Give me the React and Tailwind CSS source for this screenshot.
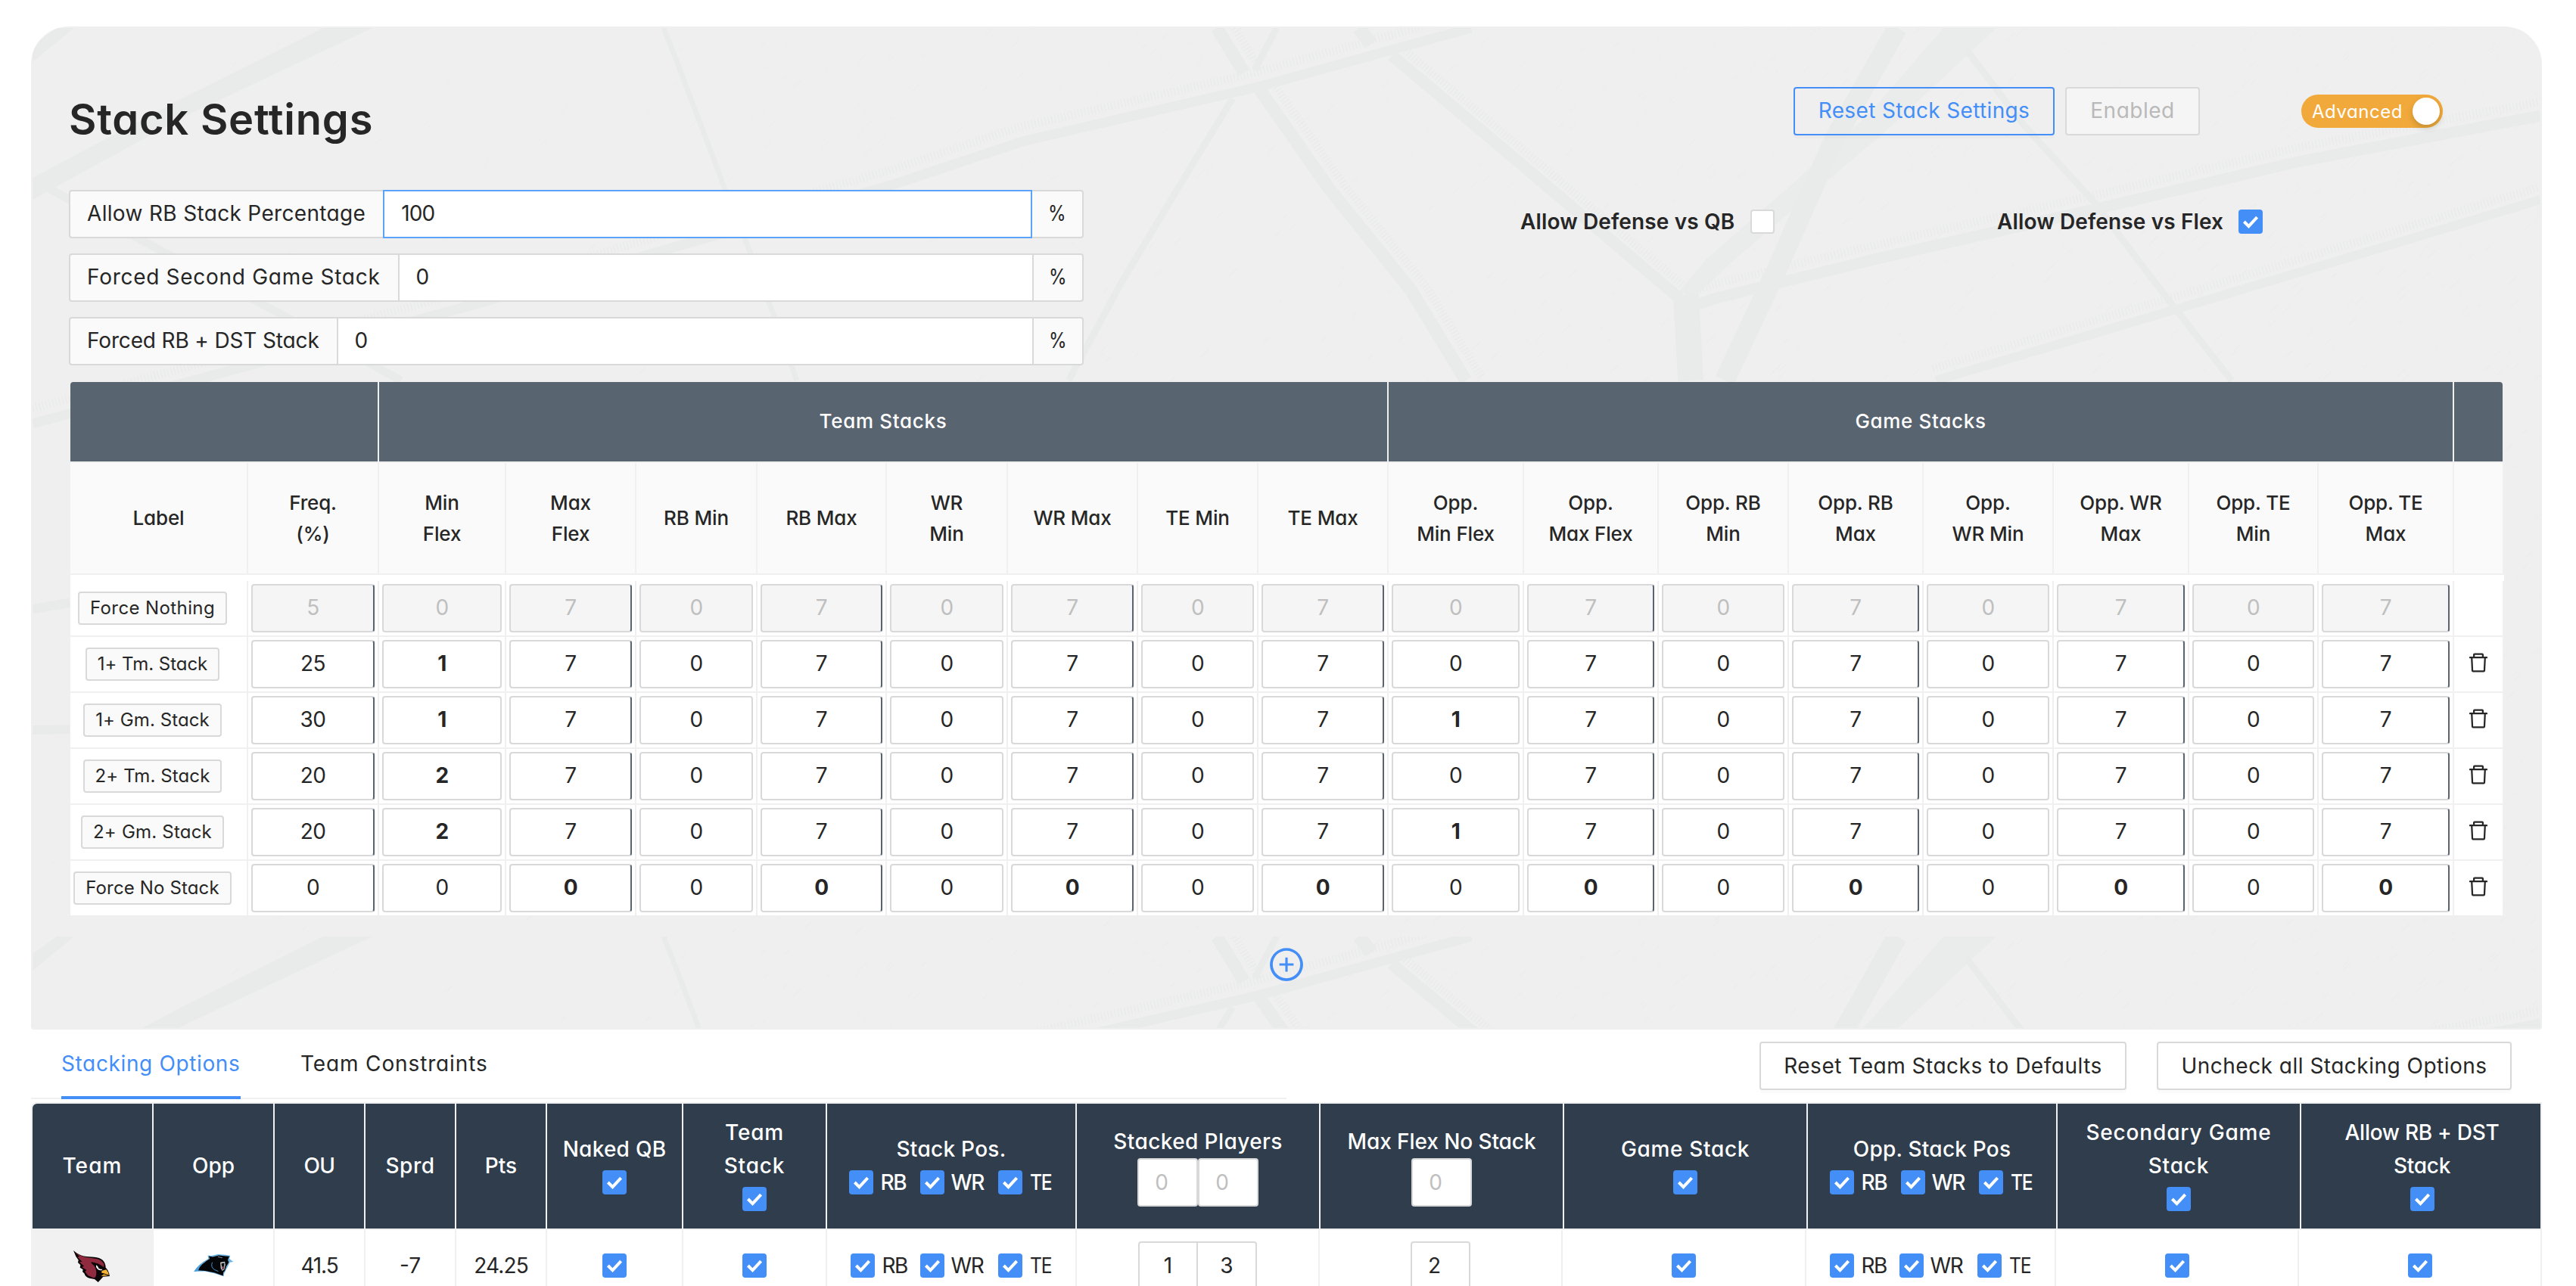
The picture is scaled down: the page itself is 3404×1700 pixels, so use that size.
import React from "react";
import { AiOutlineDelete, AiOutlinePlusCircle } from "react-icons/ai";

const GRID =
  "grid grid-cols-[235px_173px_168px_172px_160px_171px_160px_172px_159px_172px_179px_178px_172px_178px_172px_179px_171px_179px_66px]";
const GROUP_GRID = "grid grid-cols-[408px_1334px_1408px_66px]";
const HEAD_GRID =
  "grid grid-cols-[160px_160px_120px_120px_120px_180px_190px_330px_322px_322px_322px_330px_322px_318px]";
const BODY_GRID =
  "grid grid-cols-[162px_160px_120px_120px_120px_180px_190px_330px_321px_321px_322px_330px_321px_321px]";

const columns = [
  ["Label"],
  ["Freq.", "(%)"],
  ["Min", "Flex"],
  ["Max", "Flex"],
  ["RB Min"],
  ["RB Max"],
  ["WR", "Min"],
  ["WR Max"],
  ["TE Min"],
  ["TE Max"],
  ["Opp.", "Min Flex"],
  ["Opp.", "Max Flex"],
  ["Opp. RB", "Min"],
  ["Opp. RB", "Max"],
  ["Opp.", "WR Min"],
  ["Opp. WR", "Max"],
  ["Opp. TE", "Min"],
  ["Opp. TE", "Max"],
  [],
];

const sevens = [0, 7, 0, 7, 0, 7, 0, 7, 0, 7, 0, 7, 0, 7, 0, 7];
const withMins = (team, opp) => sevens.map((v, i) => (i === 0 ? team : i === 8 ? opp : v));

const stackRows = [
  { label: "Force Nothing", freq: 5, values: sevens, disabled: true, track: "tracking-[0.0165em]" },
  { label: "1+ Tm. Stack", freq: 25, values: withMins(1, 0), track: "tracking-[-0.0014em]" },
  { label: "1+ Gm. Stack", freq: 30, values: withMins(1, 1), track: "tracking-[0.004em]" },
  { label: "2+ Tm. Stack", freq: 20, values: withMins(2, 0), track: "tracking-[0.004em]" },
  { label: "2+ Gm. Stack", freq: 20, values: withMins(2, 1), track: "tracking-[0.0088em]" },
  { label: "Force No Stack", freq: 0, values: sevens.map(() => 0), track: "tracking-[0.006em]" },
];

function Check({ on = true }) {
  if (!on) return <span className="block size-8 shrink-0 rounded-[4px] border-2 border-[#d9d9d9] bg-white" />;
  return (
    <span className="block size-8 shrink-0 rounded-[4px] bg-[#448ef7]">
      <svg viewBox="0 0 32 32" className="size-8" fill="none" stroke="#fff" strokeWidth="4">
        <path d="M7.4 16 13.5 22.1 24.6 10.2" />
      </svg>
    </span>
  );
}

/* Faint field-line artwork that repeats every 1201px down the panel. */
const bands = [
  { d: "M1944 37 1828 69 1662 115 1351 187 1177 245 904 323 629 402 289 494 43 560", w: 13, hatch: [-4, -19] },
  { d: "M1608 37 1644 96M1665 119 1756 249 1864 383 1937 503", w: 17, hatch: [21, -4] },
  { d: "M1839 73 2002 210 2219 394", w: 16, hatch: [18, -6] },
  { d: "M1796 37 1812 58", w: 18 },
  { d: "M1687 37 1658 92M1629 130 1568 230 1481 375 1412 503", w: 9 },
  { d: "M877 37 897 88 958 250 988 325 1020 410 1053 503", w: 7 },
  { d: "M65 249 188 318 358 408 530 503", w: 11 },
  { d: "M2228 390 2234 503", w: 34 },
  { d: "M2507 37 2424 184 2348 356 2279 503", w: 27 },
  { d: "M2598 65 2674 165 2768 268 2855 383 2949 503", w: 9 },
  { d: "M3357 153 3036 214 2775 275 2485 341 2268 394 2244 402", w: 15, hatch: [-4, -18] },
  { d: "M3357 264 3065 352 2848 417 2558 503", w: 12, hatch: [-4, -16] },
  { d: "M43 805 92 797M43 965 92 964", w: 12 },
];

const specks = (() => {
  let s = 7;
  const rnd = () => (s = (s * 16807) % 2147483647) / 2147483647;
  let d = "";
  for (let i = 0; i < 1500; i++) {
    const x = 43 + Math.sqrt(rnd()) * 3314;
    const y = 37 + rnd() * 1200;
    const l = 3 + rnd() * 9;
    d += `M${x.toFixed(0)} ${y.toFixed(0)}l${l.toFixed(1)} ${(-l * 0.9).toFixed(1)}`;
  }
  return d;
})();

function Tile() {
  return (
    <g fill="none" stroke="#e9ebea">
      <path d={specks} strokeWidth="1" stroke="#eaebeb" />
      <path d="M427 37 492 37 246 153 43 264V235L235 133Z" fill="#e9ebea" stroke="none" />
      <path d="M75 37H98L43 82V60Z" fill="#e9ebea" stroke="none" />
      <path d="M2568 37H2638L2498 168 2410 243 2290 345 2236 396 2220 385 2252 345 2372 240 2470 150Z" fill="#eaecec" stroke="none" />
      {bands.map((b, i) => (
        <g key={i}>
          <path d={b.d} strokeWidth={b.w} />
          {b.hatch && (
            <path
              d={b.d}
              strokeWidth="11"
              strokeDasharray="1.5 3"
              stroke="#e9ebea"
              transform={`translate(${b.hatch[0]} ${b.hatch[1]})`}
            />
          )}
        </g>
      ))}
    </g>
  );
}

function FieldArt() {
  return (
    <svg className="absolute inset-0 h-[1326px] w-[3318px]" viewBox="41 35 3318 1326" aria-hidden="true">
      <defs>
        <clipPath id="first">
          <rect x="43" y="37" width="3314" height="1200" />
        </clipPath>
        <clipPath id="second">
          <rect x="43" y="37" width="3314" height="121" />
        </clipPath>
      </defs>
      <g clipPath="url(#first)">
        <Tile />
      </g>
      <g transform="translate(0 1201)" clipPath="url(#second)">
        <Tile />
      </g>
    </svg>
  );
}

function PercentField({ label, value, focused, track }) {
  const middle = focused ? "border-2 border-[#5aa3f8]" : "border-y-2 border-[#d9d9d9]";
  return (
    <div className="flex h-16 w-[1341px] text-[28px] leading-[59px]">
      <div
        className={`rounded-l-[4px] border-2 border-[#d9d9d9] bg-[#fafafa] pr-[23px] pl-[22px] whitespace-nowrap ${track} ${focused ? "border-r-0" : ""}`}
      >
        {label}
      </div>
      <div className={`flex-1 bg-white pl-[22px] tracking-[-0.03em] ${middle}`}>{value}</div>
      <div className={`w-[68px] rounded-r-[4px] border-2 border-[#d9d9d9] bg-[#fafafa] text-center ${focused ? "border-l-0" : ""}`}>
        <span className="inline-block scale-x-[0.86]">%</span>
      </div>
    </div>
  );
}

function NumberCell({ value, bold, dark, disabled }) {
  return (
    <div className="border-r-2 border-[#f0f0f0] p-1">
      <div
        className={`h-16 rounded-[4px] border-2 border-[#d9d9d9] text-center text-[28px] leading-[58px] tracking-[-0.02em] ${
          disabled ? "bg-[#f5f5f5] text-[#bfbfbf]" : "bg-white"
        } ${dark ? "border-r-[#58646f]" : ""} ${bold ? "font-bold" : ""}`}
      >
        {value}
      </div>
    </div>
  );
}

function StackRow({ row, last }) {
  return (
    <div className={`${GRID} bg-white ${last ? "h-[72px]" : "h-[74px] border-b-2 border-[#f0f0f0]"}`}>
      <div className="flex items-center justify-center border-r-2 border-[#f0f0f0] pr-4">
        <span
          className={`h-11 rounded-[4px] border-2 border-[#d9d9d9] bg-[#fafafa] px-[14px] text-[24px] leading-[40px] whitespace-nowrap ${row.track}`}
        >
          {row.label}
        </span>
      </div>
      <NumberCell value={row.freq} dark disabled={row.disabled} />
      {row.values.map((v, i) => (
        <NumberCell
          key={i}
          value={v}
          dark={i % 2 === 1}
          disabled={row.disabled}
          bold={i % 2 === 0 ? v !== 0 : v !== 7}
        />
      ))}
      <div className="flex items-center justify-center border-r-2 border-[#f0f0f0] pb-[5px]">
        {!row.disabled && <AiOutlineDelete className="size-8" />}
      </div>
    </div>
  );
}

function StackTable() {
  return (
    <div className="mt-[22px] ml-[2px] w-[3216px]">
      <div className={`${GROUP_GRID} h-[107px] border-b-2 border-[#f0f0f0] text-center text-[26px] leading-[104px] font-medium tracking-[0.026em] text-white`}>
        <div className="rounded-tl-[4px] border-r-2 border-[#f0f0f0] bg-[#58646f]" />
        <div className="border-r-2 border-[#f0f0f0] bg-[#58646f]">Team Stacks</div>
        <div className="border-r-2 border-[#f0f0f0] bg-[#58646f]">Game Stacks</div>
        <div className="mr-[2px] rounded-tr-[4px] bg-[#58646f]" />
      </div>
      <div className={`${GRID} h-[148px] border-b-2 border-[#f0f0f0] bg-[#fafafa]`}>
        {columns.map((lines, i) => (
          <div
            key={i}
            className="flex flex-col items-center justify-center border-r-2 border-[#f0f0f0] pb-px text-[26px] leading-[41px] font-medium tracking-[-0.006em]"
          >
            {lines.map((l) => (
              <span key={l} className="whitespace-nowrap">
                {l}
              </span>
            ))}
          </div>
        ))}
      </div>
      <div className="h-2 bg-white" />
      {stackRows.map((r, i) => (
        <StackRow key={r.label} row={r} last={i === stackRows.length - 1} />
      ))}
    </div>
  );
}

function HeadCell({ lines = [], track = "", children, className = "" }) {
  return (
    <div className={`flex flex-col items-center justify-center border-r-2 border-[#f0f0f0] bg-[#2f3d4c] pb-px ${className}`}>
      {lines.map((l) => (
        <span key={l} className={`whitespace-nowrap ${track}`}>
          {l}
        </span>
      ))}
      {children}
    </div>
  );
}

function HeadCheck() {
  return (
    <span className="flex h-11 items-center">
      <Check />
    </span>
  );
}

function Positions({ body }) {
  return (
    <span className="flex h-11 items-center tracking-[-0.05em]">
      <Check />
      <span className={`pl-[10px] ${body ? "w-[60px]" : "w-[62px]"}`}>RB</span>
      <Check />
      <span className="w-[71px] pl-[9px]">WR</span>
      <Check />
      <span className={`pl-[10px] ${body ? "w-[40px]" : "w-[42px]"}`}>
        <span className="inline-block origin-left scale-x-[0.88]">TE</span>
      </span>
    </span>
  );
}

function Placeholder() {
  return (
    <span className="block h-16 w-20 rounded-[4px] border-2 border-[#d9d9d9] bg-white pr-[16px] text-center text-[28px] leading-[60px] font-normal text-[#bfbfbf]">
      0
    </span>
  );
}

function CardinalsLogo() {
  return (
    <svg viewBox="0 0 144 126" className="mt-[1px] h-[42px] w-12">
      <path d="M0 0 12 10Q30 22 52 24L82 26Q104 27 116 38Q128 50 128 68Q140 78 144 102L118 104 98 126 84 114 64 110Q46 104 44 92L36 84 38 76 26 68 28 58 18 48 20 38 10 24Z" fill="#0b0708" />
      <path d="M7 7Q30 26 56 28L86 32Q112 34 122 56L120 66Q100 50 72 46Q66 48 82 60Q94 78 90 98Q88 110 78 108L58 100 46 84 52 78 34 66 42 62 24 46 34 44 16 26 24 24Z" fill="#8f2a3f" />
      <path d="M90 58 100 66 112 72 114 78Q98 82 90 66Z" fill="#fff" />
      <path d="M96 60 120 68 110 75 100 71Z" fill="#0b0708" />
      <path d="M114 80 130 76Q138 84 141 99L110 102 122 92 110 88Z" fill="#f4b333" />
      <path d="M110 90 140 98" stroke="#0b0708" strokeWidth="3" />
    </svg>
  );
}

function PanthersLogo() {
  return (
    <svg viewBox="0 0 160 90" className="h-[30px] w-[53px]">
      <path d="M0 69Q20 38 58 18L56 4 70 6 96 0 126 2 146 6 142 18 158 30 144 32 138 44 128 64 120 80 120 88 82 76 44 68Z" fill="#6db4e6" />
      <path d="M14 64Q30 38 64 18L60 7 76 10 100 4 128 7 142 8 136 22 140 32 130 48 124 66 118 72 117 86 84 74 46 66Z" fill="#050607" />
      <path d="M2 69Q14 48 40 32 24 46 18 65Z" fill="#4b9fd8" />
      <path d="M74 32Q66 52 84 62L98 68" fill="none" stroke="#3f93cf" strokeWidth="3" />
      <path d="M106 32 124 29 126 42 122 60 114 66 108 56Z" fill="#cfd4d8" />
      <path d="M110 37 122 34 121 56 114 62Z" fill="#0a0a0c" />
      <path d="M112 52 118 46 120 54 115 60Z" fill="#a9506a" />
      <path d="M96 10 114 14" stroke="#8a9199" strokeWidth="3" />
    </svg>
  );
}

function BodyCell({ children, className = "" }) {
  return <div className={`flex items-center justify-center border-r-2 border-[#f0f0f0] pb-[2px] ${className}`}>{children}</div>;
}

function OptionsTable() {
  return (
    <div className="mt-1 ml-[41px] w-[3318px]">
      <div className={`${HEAD_GRID} h-[169px] rounded-tl-[8px] border-y-2 border-l-2 border-[#f0f0f0] text-[28px] leading-[44px] font-medium text-white`}>
        <HeadCell lines={["Team"]} track="tracking-[0.04em]" className="rounded-tl-[6px]" />
        <HeadCell lines={["Opp"]} />
        <HeadCell lines={["OU"]} track="tracking-[-0.02em]" />
        <HeadCell lines={["Sprd"]} track="tracking-[0.02em]" />
        <HeadCell lines={["Pts"]} />
        <HeadCell lines={["Naked QB"]} track="tracking-[0.009em]">
          <HeadCheck />
        </HeadCell>
        <HeadCell lines={["Team", "Stack"]} track="tracking-[0.03em]">
          <HeadCheck />
        </HeadCell>
        <HeadCell lines={["Stack Pos."]} track="tracking-[0.01em]">
          <Positions />
        </HeadCell>
        <HeadCell lines={["Stacked Players"]} track="tracking-[0.0147em]">
          <span className="flex">
            <Placeholder />
            <Placeholder />
          </span>
        </HeadCell>
        <HeadCell lines={["Max Flex No Stack"]} track="tracking-[-0.003em]">
          <Placeholder />
        </HeadCell>
        <HeadCell lines={["Game Stack"]} track="tracking-[0.024em]">
          <HeadCheck />
        </HeadCell>
        <HeadCell lines={["Opp. Stack Pos"]} track="tracking-[0.008em]">
          <Positions />
        </HeadCell>
        <HeadCell lines={["Secondary Game", "Stack"]} track="tracking-[0.03em]">
          <HeadCheck />
        </HeadCell>
        <HeadCell lines={["Allow RB + DST", "Stack"]} track="tracking-[-0.01em]" className="border-r-0 pl-[3px]">
          <HeadCheck />
        </HeadCell>
      </div>
      <div className={`${BODY_GRID} h-24 bg-white text-[28px]`}>
        <BodyCell className="bg-[#f1f1f1]">
          <CardinalsLogo />
        </BodyCell>
        <BodyCell>
          <PanthersLogo />
        </BodyCell>
        <BodyCell className="tracking-[-0.04em]">41.5</BodyCell>
        <BodyCell>-7</BodyCell>
        <BodyCell className="tracking-[-0.031em]">24.25</BodyCell>
        <BodyCell>
          <Check />
        </BodyCell>
        <BodyCell>
          <Check />
        </BodyCell>
        <BodyCell>
          <Positions body />
        </BodyCell>
        <BodyCell className="pb-0 leading-[60px]">
          <span className="block h-16 w-[79px] rounded-l-[4px] border-2 border-[#d9d9d9] text-center">1</span>
          <span className="block h-16 w-[78px] rounded-r-[4px] border-2 border-l-0 border-[#d9d9d9] text-center">3</span>
        </BodyCell>
        <BodyCell className="pb-0 leading-[60px]">
          <span className="block h-16 w-[79px] rounded-[4px] border-2 border-[#d9d9d9] pr-4 text-center">2</span>
        </BodyCell>
        <BodyCell>
          <Check />
        </BodyCell>
        <BodyCell>
          <Positions body />
        </BodyCell>
        <BodyCell>
          <Check />
        </BodyCell>
        <BodyCell>
          <Check />
        </BodyCell>
      </div>
    </div>
  );
}

export default function App() {
  return (
    <div className="h-[1700px] w-[3404px] overflow-hidden bg-white pt-[35px] font-['Inter',sans-serif] text-[#262626] [font-feature-settings:'cv11']">
      <section className="relative ml-[41px] h-[1326px] w-[3318px] overflow-hidden rounded-t-[50px] rounded-b-[4px] bg-[#efefef]">
        <FieldArt />
        <div className="relative pt-20 pl-[50px]">
          <div className="flex h-16 items-start">
            <h1 className="mt-[11px] flex-1 text-[56px] leading-[64px] font-[560] tracking-[0.014em]">Stack Settings</h1>
            <div className="flex items-start pr-[131px] text-[28px] leading-[59px]">
              <button className="h-16 w-[345px] rounded-[4px] border-2 border-[#448ef7] pb-px tracking-[0.0125em] text-[#448ef7] shadow-[0_4px_0_rgba(0,0,0,0.02)]">
                Reset Stack Settings
              </button>
              <button className="ml-[14px] h-16 w-[178px] rounded-[4px] border-2 border-[#d9d9d9] bg-[#f5f5f5] pb-px tracking-[0.018em] text-[#b9b9b9]">
                Enabled
              </button>
              <div className="mt-[10px] ml-[134px] flex h-11 w-[187px] items-center justify-between rounded-full bg-[#f2a93b] pr-1 pl-[14px] text-[24px] tracking-[0.022em] text-white">
                <span>Advanced</span>
                <span className="size-9 rounded-full bg-white shadow-[0_4px_8px_rgba(0,35,11,0.2)]" />
              </div>
            </div>
          </div>
          <div className="mt-[72px] flex items-start">
            <div className="flex flex-col gap-5">
              <PercentField label="Allow RB Stack Percentage" value="100" focused track="tracking-[0.0118em]" />
              <PercentField label="Forced Second Game Stack" value="0" track="tracking-[0.0255em]" />
              <PercentField label="Forced RB + DST Stack" value="0" track="tracking-[-0.0053em]" />
            </div>
            <div className="mt-[26px] ml-[577px] flex h-8 items-center text-[28px] leading-8 font-semibold tracking-[0.0046em]">
              <span className="w-[304px] whitespace-nowrap">Allow Defense vs QB</span>
              <Check on={false} />
              <span className="ml-[294px] w-[319px] whitespace-nowrap">Allow Defense vs Flex</span>
              <Check />
            </div>
          </div>
          <StackTable />
          <div className="mt-[40px] flex w-[3218px] justify-center">
            <AiOutlinePlusCircle className="size-[50px] text-[#448ef7]" />
          </div>
        </div>
      </section>

      <div className="ml-[41px] flex h-[92px] w-[3318px] justify-between">
        <nav className="flex w-[1659px] border-b-2 border-[#f0f0f0] pl-10 text-[28px]">
          <span className="-mb-[2px] h-[92px] w-[237px] border-b-4 border-[#448ef7] leading-[91px] tracking-[0.0225em] whitespace-nowrap text-[#448ef7]">
            Stacking Options
          </span>
          <span className="ml-[79px] leading-[91px] tracking-[0.031em]">Team Constraints</span>
        </nav>
        <div className="flex gap-10 pt-4 pr-10 text-[28px] leading-[60px]">
          <button className="h-16 w-[485px] rounded-[4px] border-2 border-[#d9d9d9] tracking-[0.018em] shadow-[0_4px_0_rgba(0,0,0,0.015)]">
            Reset Team Stacks to Defaults
          </button>
          <button className="h-16 w-[469px] rounded-[4px] border-2 border-[#d9d9d9] tracking-[0.0175em] shadow-[0_4px_0_rgba(0,0,0,0.015)]">
            Uncheck all Stacking Options
          </button>
        </div>
      </div>
      <OptionsTable />
    </div>
  );
}
